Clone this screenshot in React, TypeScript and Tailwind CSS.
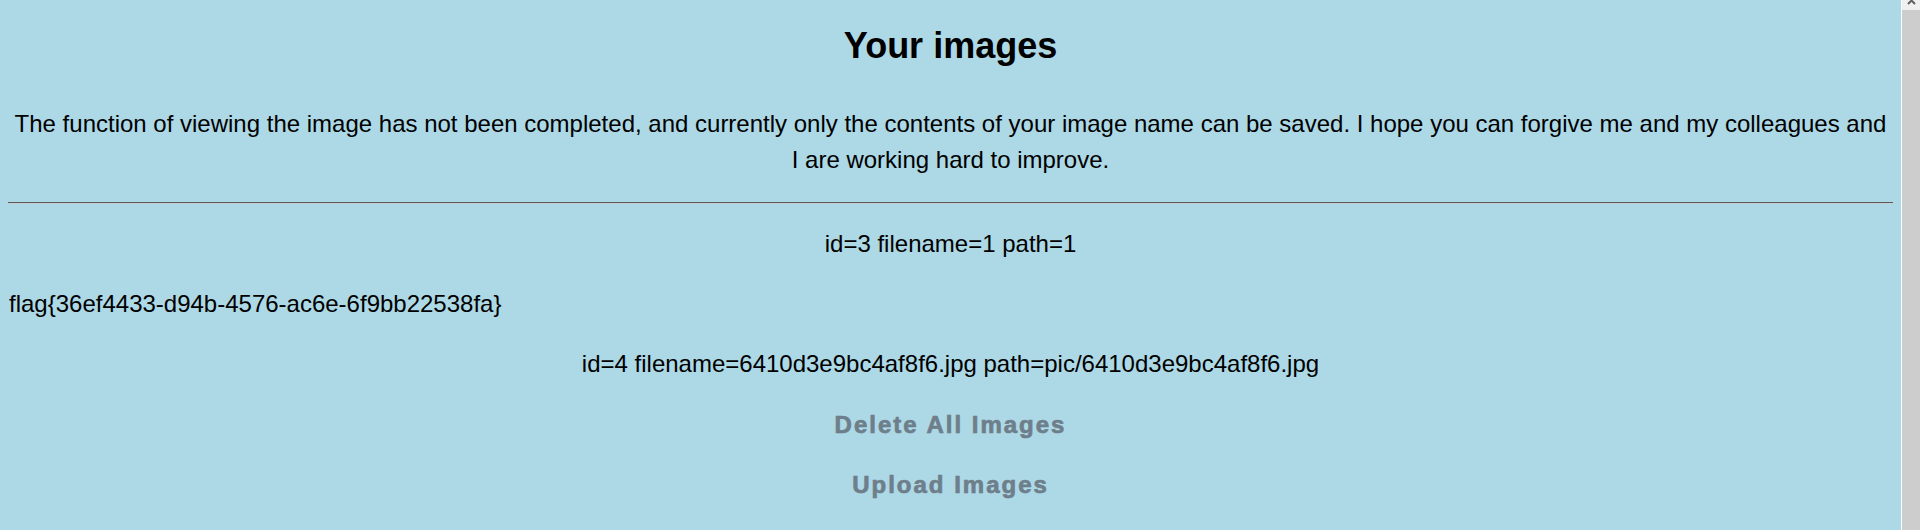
export default function App() {
  return (
    <div className="flex h-[530px] w-full overflow-hidden bg-[#add8e6] font-['Liberation_Sans',Arial,sans-serif] text-black">
      <main className="flex-1 px-[8px] pt-[19px]">
        <h1 className="text-center text-[36px] font-bold leading-[53px]">
          Your images
        </h1>
        <p className="mt-[34px] text-center text-[24px] leading-[36px]">
          The function of viewing the image has not been completed, and
          currently only the contents of your image name can be saved. I hope
          you can forgive me and my colleagues and I are working hard to
          improve.
        </p>
        <hr className="mt-[24px] border-t border-b border-t-[#5a5a5a] border-b-[#c4cdd1]" />

        <div className="mt-[22px] text-center text-[24px] leading-[36px]">
          id=3 filename=1 path=1
        </div>
        <div className="mt-[24px] pl-px text-left text-[24px] leading-[36px]">
          flag{"{"}36ef4433-d94b-4576-ac6e-6f9bb22538fa{"}"}
        </div>
        <div className="mt-[24px] text-center text-[24px] leading-[36px]">
          id=4 filename=6410d3e9bc4af8f6.jpg path=pic/6410d3e9bc4af8f6.jpg
        </div>

        <div className="mt-[25px] text-center text-[24px] font-bold leading-[36px] tracking-[2px] text-[#6e7f8b] [-webkit-text-stroke:0.7px_#6e7f8b]">
          Delete All Images
        </div>
        <div className="mt-[24px] text-center text-[24px] font-bold leading-[36px] tracking-[2px] text-[#6e7f8b] [-webkit-text-stroke:0.7px_#6e7f8b]">
          Upload Images
        </div>
      </main>

      {/* scrollbar */}
      <div className="flex w-[19px] flex-col border-l border-white bg-[#cdcdcd]">
        <div className="flex h-[10px] justify-center bg-[#f0f0f0]">
          <svg width="9" height="6" viewBox="0 0 9 6" className="mt-[-1px]">
            <path d="M1 5 L4.5 1.5 L8 5" fill="none" stroke="#606060" strokeWidth="2" />
          </svg>
        </div>
      </div>
    </div>
  );
}
